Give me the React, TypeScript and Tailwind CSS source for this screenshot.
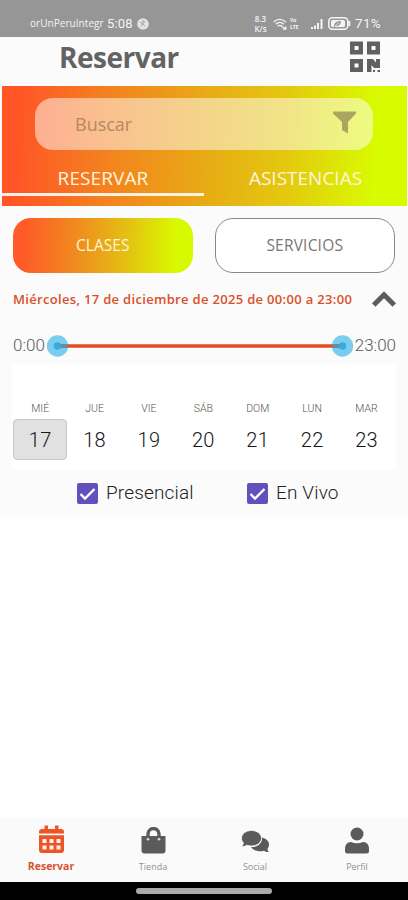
import { useState } from "react";

const days = [
  { name: "MIÉ", day: 17 },
  { name: "JUE", day: 18 },
  { name: "VIE", day: 19 },
  { name: "SÁB", day: 20 },
  { name: "DOM", day: 21 },
  { name: "LUN", day: 22 },
  { name: "MAR", day: 23 },
];

function StatusBar() {
  return (
    <div className="flex h-[37px] shrink-0 items-center bg-[#969696] pt-[10px] pl-[30px] text-[#f4f4f4]">
      <span className="w-[74px] text-[10px] tracking-[0.05px] whitespace-nowrap">orUnPeruIntegr</span>
      <span className="ml-[3px] w-[27px] font-['Roboto'] text-[13px] tracking-[0.2px] whitespace-nowrap">5:08</span>
      <svg className="ml-[3px] h-3 w-3" viewBox="0 0 12 12">
        <circle cx="6" cy="6" r="5.8" fill="#e2e2e2" />
        <path d="M3 4l5 4M8 3L4 8M6 2v3" stroke="#a3a3a3" strokeWidth="1" fill="none" />
      </svg>
      <div className="ml-[104px] w-[15px] text-center text-[8px] leading-[10px] font-semibold">
        <div>8.3</div>
        <div>K/s</div>
      </div>
      <svg className="ml-[5px] h-3 w-[14px] shrink-0" viewBox="0 0 14 12" fill="none" stroke="currentColor" strokeWidth="1.3">
        <path d="M0.6 4Q6.5-1.2 13 4M2.7 6.2Q6.8 2.6 11 6.2M4.8 8.3Q6.8 6.5 9 8.3" />
        <path d="M8 8l5 3M12.8 8.6V11H10" />
      </svg>
      <div className="ml-[3px] w-[12px] text-[5px] leading-[7px] font-bold">
        <div>Vo</div>
        <div>LTE</div>
      </div>
      <svg className="ml-[9px] h-[10px] w-[12px] shrink-0" viewBox="0 0 12 10" fill="currentColor">
        <path d="M0 8h2v2H0zM3 6.5h2V10H3zM6 4h2v6H6zM9.5 0h2v10h-2z" />
      </svg>
      <svg className="ml-[5px] h-[13px] w-[23px] shrink-0" viewBox="0 0 23 13">
        <rect x="0.8" y="0.8" width="19" height="11.4" rx="3.5" fill="none" stroke="currentColor" strokeWidth="1.5" />
        <rect x="3" y="3" width="14" height="7" rx="1.5" fill="currentColor" />
        <path d="M6 9Q6 4 13 4Q13 9 8 9L6 10" fill="#969696" />
        <path d="M7 9l4-3.5" stroke="#eee" strokeWidth="0.8" />
        <path d="M21.3 4v5" stroke="currentColor" strokeWidth="2" />
      </svg>
      <span className="ml-[4px] font-['Roboto'] text-[13.5px] tracking-[0.3px]">71%</span>
    </div>
  );
}

function QrIcon({ className }: { className: string }) {
  return (
    <svg className={className} viewBox="0 0 30 32" fill="currentColor">
      <path
        fillRule="evenodd"
        d="M0 .5h13v13H0zM4.500 5v4h4V5zM17 .5h13v13H17zM21.500 5v4h4V5zM0 18h13v13H0zM4.500 22.500v4h4v-4z"
      />
      <path d="M17 18h6l3 3.500V18h4v9h-6l-2.500-3v7H17z" />
      <path d="M23 29h2v2h-2zM27.500 29H30v2h-2.500z" />
    </svg>
  );
}

function CalendarIcon({ className }: { className: string }) {
  return (
    <svg className={className} viewBox="0 0 25 28">
      <path d="M5.500 5V0.500h3.500V4h7V0.500h3.500V4H22a3 3 0 0 1 3 3v1.500H0V7a3 3 0 0 1 3-3h2.500z" fill="currentColor" />
      <path d="M0 10.300h25V25a3 3 0 0 1-3 3H3a3 3 0 0 1-3-3z" fill="currentColor" />
      <path
        d="M3.500 14h4v4h-4zM10.500 14h4v4h-4zM17.500 14h4v4h-4zM3.500 20.500h4v4h-4zM10.500 20.500h4v4h-4zM17.500 20.500h4v4h-4z"
        fill="#fff4ef"
      />
    </svg>
  );
}

function BagIcon({ className }: { className: string }) {
  return (
    <svg className={className} viewBox="0 0 25 27">
      <path d="M0.5 9h24v14.5a3 3 0 0 1-3 3h-18a3 3 0 0 1-3-3z" fill="currentColor" />
      <path d="M7 12V7a5.5 5.5 0 0 1 11 0v5" fill="none" stroke="currentColor" strokeWidth="3.4" />
      <circle cx="7" cy="12.3" r="1.3" fill="#ddd" />
      <circle cx="18" cy="12.3" r="1.3" fill="#ddd" />
    </svg>
  );
}

function ChatIcon({ className }: { className: string }) {
  return (
    <svg className={className} viewBox="0 0 29 23" fill="currentColor">
      <path d="M21 7.5C25 8.5 28 11 28 14.5c0 1.7-.7 3.2-1.500 4.400.1 1.500.7 2.500 1.700 3.100-2 .3-3.900-.2-5.200-1.200-5 1.300-10.500.2-13-3.800C17 17.500 21.500 13 21 7.500z" />
      <path
        d="M10.500.500c5.600 0 10 3.400 10 7.700s-4.400 7.800-10 7.800c-1.700 0-3.200-.3-4.600-.8-1.500 1-3.300 1.500-5.400 1.300C1.500 15.500 2.200 14.300 2.500 13 1.200 11.700.500 10 .500 8.200.500 3.900 4.900.500 10.500.500z"
        stroke="#fafafa"
        strokeWidth="0.8"
      />
    </svg>
  );
}

function UserIcon({ className }: { className: string }) {
  return (
    <svg className={className} viewBox="0 0 24 27" fill="currentColor">
      <circle cx="12" cy="7" r="6.500" />
      <path d="M6 15q6 2.500 12 0c4 0 6 3 6 7v2q0 2.500-2.500 2.500h-19Q0 26.500 0 24v-2c0-4 2-7 6-7z" />
    </svg>
  );
}

function Checkbox({ label, className }: { label: string; className: string }) {
  const [checked, setChecked] = useState(true);

  return (
    <button onClick={() => setChecked(!checked)} className={`flex items-center ${className}`}>
      <span className="flex h-[21px] w-[21px] items-center justify-center rounded-[2px] bg-[#6151bd]">
        {checked && (
          <svg className="h-[14px] w-[17px]" viewBox="0 0 17 14" fill="none" stroke="white" strokeWidth="2.4">
            <path d="M1.5 7l4.5 4.5L15.5 2" />
          </svg>
        )}
      </span>
      <span className="ml-2 font-['Roboto'] text-[19px] font-light tracking-[0.15px] whitespace-nowrap text-[#222]">{label}</span>
    </button>
  );
}

export default function App() {
  const [selected, setSelected] = useState(17);

  return (
    <main className="flex h-[900px] w-[408px] flex-col overflow-hidden bg-white font-['Open_Sans',sans-serif]">
      <StatusBar />

      {/* Title */}
      <header className="flex h-[49px] shrink-0 items-start justify-between bg-[#fbfbfb] pr-[28px] pl-[59px]">
        <h1 className="text-[28px] leading-[40px] font-bold tracking-[-0.5px] text-[#636363]">Reservar</h1>
        <QrIcon className="mt-[4px] h-[32px] w-[30px] text-[#606060]" />
      </header>

      {/* Search and tabs */}
      <section className="bg-[#fbfbfb] pr-px pl-[2px]">
        <div className="h-[120px] bg-[linear-gradient(92deg,#ff5527_4%,#f4801f_25%,#e7ad14_52%,#e4c80f_70%,#d9fb00_92%)] pt-3">
          <div className="mr-[34px] ml-[33px] flex h-[52px] items-center justify-between rounded-[18px] bg-white/50 pr-[17px] pl-[40px]">
            <span className="text-[18px] text-[#b4895e]">Buscar</span>
            <svg className="mb-[3px] h-[23px] w-[23px] text-[#aaa65f]" viewBox="0 0 23 23" fill="currentColor">
              <path d="M0 .5h23v2L15 11v11.500l-6-3.500v-8L0 2.500z" />
            </svg>
          </div>
          <div className="flex h-[46px] text-[19px] text-[#fff5df]">
            <div className="flex h-full w-[202px] items-center justify-center border-b-[3px] border-[#fff0e4] pt-[13px] tracking-[0.1px]">RESERVAR</div>
            <div className="flex flex-1 items-center justify-center pt-[10px]">ASISTENCIAS</div>
          </div>
        </div>
      </section>

      {/* Filters */}
      <section className="flex h-[311px] shrink-0 flex-col bg-[#fbfbfb] px-3 pt-[12px]">
        <div className="flex h-[55px] gap-[22px] px-px text-[15.5px]">
          <button className="w-[180px] rounded-[18px] bg-[linear-gradient(92deg,#ff5a28_6%,#f08b1e_35%,#e4c012_63%,#d9f900_90%)] text-[#fff4d8]">CLASES</button>
          <button className="w-[181px] rounded-[18px] border border-[#888] bg-white tracking-[0.2px] text-[#777]">SERVICIOS</button>
        </div>

        <div className="flex h-[54px] items-center justify-between pl-px">
          <span className="text-[13px] font-semibold tracking-[0.32px] whitespace-nowrap text-[#d8502a]">
            Miércoles, 17 de diciembre de 2025 de 00:00 a 23:00
          </span>
          <svg className="mb-[3px] h-[16px] w-[24px] text-[#5c5c5c]" viewBox="0 0 24 16" fill="none" stroke="currentColor" strokeWidth="5">
            <path d="M1.700 14L12 3.700 22.300 14" />
          </svg>
        </div>

        <div className="flex h-[37px] items-center pt-px font-['Roboto'] text-[17px] font-light text-[#5a5a5a]">
          <span className="w-[35px] pl-px whitespace-nowrap">0:00</span>
          <svg className="h-[22px] w-[307px] shrink-0" viewBox="0 0 307 22">
            <circle cx="10.5" cy="11" r="10.7" fill="#7bcdf0" />
            <circle cx="295.5" cy="11" r="10.7" fill="#7bcdf0" />
            <path d="M10 11h286" stroke="#e24d22" strokeWidth="3.5" />
            <path d="M11 11h10M285 11h10" stroke="#608fa5" strokeWidth="3.5" />
            <circle cx="10.5" cy="11" r="3.7" fill="#36abdc" />
            <circle cx="295.5" cy="11" r="3.7" fill="#36abdc" />
          </svg>
          <span className="pl-px whitespace-nowrap">23:00</span>
        </div>

        {/* Week */}
        <div className="flex h-[106px] items-end bg-white px-px pb-[10px] font-['Roboto']">
          {days.map((d) => (
            <button key={d.day} onClick={() => setSelected(d.day)} className="flex w-[54.4px] flex-col items-center">
              <span className="mb-[3px] text-[10.5px] leading-[14px] font-light text-[#555]">{d.name}</span>
              <span
                className={`flex h-[41px] w-full items-center justify-center rounded-[4px] border text-[20px] font-light tracking-[0.3px] text-[#161616] ${
                  selected === d.day ? "border-[#c6c6c6] bg-[#e1e1e1]" : "border-transparent"
                }`}
              >
                {d.day}
              </span>
            </button>
          ))}
        </div>

        <div className="flex h-[47px] items-center">
          <Checkbox label="Presencial" className="ml-[65px] w-[170px]" />
          <Checkbox label="En Vivo" className="" />
        </div>
      </section>

      <div className="flex-1" />

      {/* Bottom navigation */}
      <nav className="flex h-[64px] shrink-0 bg-[#fafafa] text-[#5b5b5b]">
        <div className="flex w-1/4 flex-col items-center pt-[7px] text-[#ef5427]">
          <CalendarIcon className="h-[28px] w-[25px]" />
          <span className="mt-[6px] text-[10.5px] leading-[15px] font-bold text-[#d95332]">Reservar</span>
        </div>
        <div className="flex w-1/4 flex-col items-center pt-[9px]">
          <BagIcon className="h-[27px] w-[25px]" />
          <span className="mt-[6px] text-[9px] leading-[14px] text-[#929292]">Tienda</span>
        </div>
        <div className="flex w-1/4 flex-col items-center pt-[12px]">
          <ChatIcon className="h-[23px] w-[29px]" />
          <span className="mt-[7px] text-[9px] leading-[14px] text-[#929292]">Social</span>
        </div>
        <div className="flex w-1/4 flex-col items-center pt-[9px]">
          <UserIcon className="h-[27px] w-[24px]" />
          <span className="mt-[6px] text-[9px] leading-[14px] text-[#929292]">Perfil</span>
        </div>
      </nav>
      <div className="flex h-[18px] shrink-0 justify-center bg-black pt-[6px]">
        <div className="h-[6px] w-[136px] rounded-full bg-[#aaa]" />
      </div>
    </main>
  );
}
